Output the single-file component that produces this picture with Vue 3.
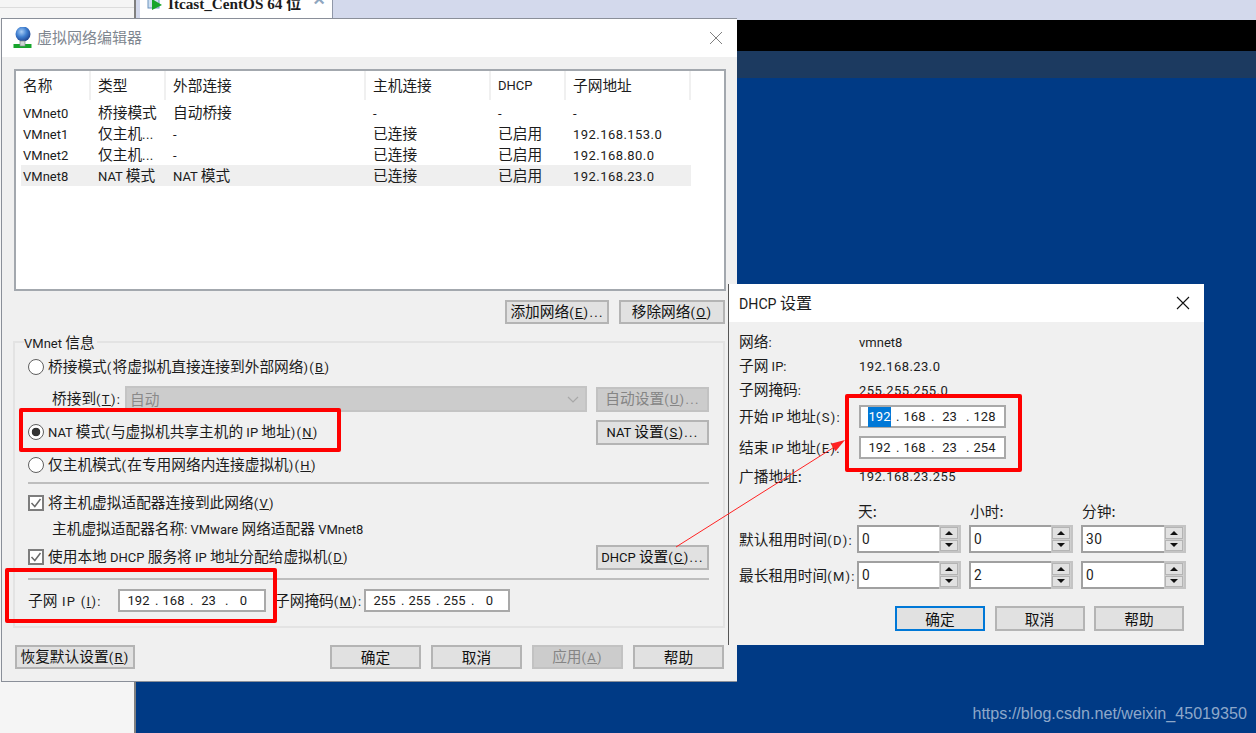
<template>
  <div class="desktop">
    <aside class="sidebar"><div class="sidebar-top"></div></aside>
    <section class="stage">
      <div class="tabbar">
        <div class="tab">
          <svg class="tab-icon" width="16" height="16" viewBox="0 0 16 16">
            <rect x="1" y="0" width="11" height="11" fill="#cfe0f2" stroke="#6c93bd" />
            <path d="M5 2 L15 8 L5 13 Z" fill="#16a52b" />
          </svg>
          <span class="tab-name">Itcast_CentOS 64 位</span>
          <span class="tab-close">×</span>
        </div>
      </div>
      <div class="band-black"></div>
      <div class="band-dark"></div>
      <div class="band-blue"></div>
    </section>

    <!-- 虚拟网络编辑器 -->
    <div class="win main-win">
      <header class="titlebar">
        <svg class="app-icon" width="20" height="21" viewBox="0 0 20 21">
          <defs>
            <radialGradient id="globe" cx="0.4" cy="0.35" r="0.7">
              <stop offset="0" stop-color="#a9cdf5" />
              <stop offset="0.5" stop-color="#3f7fd0" />
              <stop offset="1" stop-color="#1c3f8c" />
            </radialGradient>
          </defs>
          <circle cx="10" cy="7" r="7.5" fill="url(#globe)" />
          <rect x="0.5" y="17" width="18" height="4" fill="#17a52c" />
          <rect x="7" y="14" width="5" height="5" fill="#cfd5d5" stroke="#7d8a8a" stroke-width="0.7" />
        </svg>
        <span class="main-title">虚拟网络编辑器</span>
        <svg class="close-x" width="14" height="14" viewBox="0 0 14 14">
          <path d="M1 1 L13 13 M13 1 L1 13" stroke="#808080" stroke-width="1" fill="none" />
        </svg>
      </header>

      <div class="main-body">
        <div class="list">
          <div class="list-head">
            <div v-for="c in columns" :key="c" class="head-cell"><T :t="c" /></div>
          </div>
          <div v-for="r in networks" :key="r[0]" class="list-row" :class="{ active: r[0] === 'VMnet8' }">
            <div v-for="(c, i) in r" :key="i" class="cell"><T :t="c" /></div>
          </div>
        </div>

        <div class="list-actions">
          <button class="btn btn-add"><T t="添加网络(&E)..." /></button>
          <button class="btn btn-remove"><T t="移除网络(&O)" /></button>
        </div>

        <div class="group">
          <span class="legend"><T t="VMnet 信息" /></span>

          <div class="row first">
            <span class="radio"></span>
            <T t="桥接模式(将虚拟机直接连接到外部网络)(&B)" />
          </div>
          <div class="row bridge-row">
            <span class="bridge-label"><T t="桥接到(&T):" /></span>
            <div class="select">
              <span>自动</span>
              <svg width="12" height="7" viewBox="0 0 12 7">
                <path d="M1 1 L6 6 L11 1" stroke="#a8a8a8" stroke-width="1.2" fill="none" />
              </svg>
            </div>
            <button class="btn btn-side disabled"><T t="自动设置(&U)..." /></button>
          </div>
          <div class="row nat-row">
            <span class="radio checked"></span>
            <T t="NAT 模式(与虚拟机共享主机的 IP 地址)(&N)" />
            <button class="btn btn-side push"><T t="NAT 设置(&S)..." /></button>
          </div>
          <div class="row host-row">
            <span class="radio"></span>
            <T t="仅主机模式(在专用网络内连接虚拟机)(&H)" />
          </div>
          <div class="sep sep-a"></div>
          <div class="row adapter-row">
            <span class="check">
              <svg width="12" height="12" viewBox="0 0 12 12">
                <path d="M1.5 6 L4.8 9.5 L10.5 2" stroke="#6a6a6a" stroke-width="1.5" fill="none" />
              </svg>
            </span>
            <T t="将主机虚拟适配器连接到此网络(&V)" />
          </div>
          <div class="row adapter-name">
            <T t="主机虚拟适配器名称: VMware 网络适配器 VMnet8" />
          </div>
          <div class="row dhcp-row">
            <span class="check">
              <svg width="12" height="12" viewBox="0 0 12 12">
                <path d="M1.5 6 L4.8 9.5 L10.5 2" stroke="#6a6a6a" stroke-width="1.5" fill="none" />
              </svg>
            </span>
            <T t="使用本地 DHCP 服务将 IP 地址分配给虚拟机(&D)" />
            <button class="btn btn-side push"><T t="DHCP 设置(&C)..." /></button>
          </div>
          <div class="sep sep-b"></div>
          <div class="row subnet-row">
            <span class="subnet-label"><T t="子网 IP (&I):" /></span>
            <div class="ip ip-subnet">
              <template v-for="(o, i) in subnetIp" :key="i">
                <span class="oct">{{ o }}</span><span v-if="i < 3" class="dot">.</span>
              </template>
            </div>
            <span class="mask-label"><T t="子网掩码(&M):" /></span>
            <div class="ip ip-mask">
              <template v-for="(o, i) in maskIp" :key="i">
                <span class="oct">{{ o }}</span><span v-if="i < 3" class="dot">.</span>
              </template>
            </div>
          </div>
        </div>

        <div class="main-actions">
          <button class="btn btn-restore"><T t="恢复默认设置(&R)" /></button>
          <button class="btn btn-foot foot-first">确定</button>
          <button class="btn btn-foot">取消</button>
          <button class="btn btn-foot disabled"><T t="应用(&A)" /></button>
          <button class="btn btn-foot">帮助</button>
        </div>
      </div>
    </div>

    <!-- DHCP 设置 -->
    <div class="win dhcp-win">
      <header class="titlebar dhcp-titlebar">
        <span class="dhcp-title"><T t="DHCP 设置" /></span>
        <svg class="close-x dark" width="14" height="14" viewBox="0 0 14 14">
          <path d="M1 1 L13 13 M13 1 L1 13" stroke="#111" stroke-width="1.1" fill="none" />
        </svg>
      </header>
      <div class="dhcp-body">
        <div v-for="f in dhcpInfo" :key="f[0]" class="info-row">
          <span class="info-label"><T :t="f[0]" /></span>
          <span class="info-value"><T :t="f[1]" /></span>
        </div>
        <div class="range-row range-start">
          <span class="info-label"><T t="开始 IP 地址(S):" /></span>
          <div class="ip ip-range">
            <template v-for="(o, i) in startIp" :key="i">
              <span class="oct"><span :class="{ picked: i === 0 }">{{ o }}</span></span><span v-if="i < 3" class="dot">.</span>
            </template>
          </div>
        </div>
        <div class="range-row range-end">
          <span class="info-label"><T t="结束 IP 地址(E):" /></span>
          <div class="ip ip-range">
            <template v-for="(o, i) in endIp" :key="i">
              <span class="oct">{{ o }}</span><span v-if="i < 3" class="dot">.</span>
            </template>
          </div>
        </div>
        <div class="info-row broadcast">
          <span class="info-label">广播地址:</span>
          <span class="info-value"><T t="192.168.23.255" /></span>
        </div>

        <div class="lease">
          <span></span>
          <span v-for="u in leaseUnits" :key="u" class="unit">{{ u }}</span>
          <template v-for="l in leases" :key="l.label">
            <span class="lease-label"><T :t="l.label" /></span>
            <div v-for="(v, i) in l.values" :key="i" class="spin">
              <div class="spin-input"><T :t="v" /></div>
              <div class="spin-btns">
                <span class="spin-btn"><i class="up"></i></span>
                <span class="spin-btn"><i class="down"></i></span>
              </div>
            </div>
          </template>
        </div>

        <div class="dhcp-actions">
          <button class="btn btn-dhcp focused">确定</button>
          <button class="btn btn-dhcp">取消</button>
          <button class="btn btn-dhcp">帮助</button>
        </div>
      </div>
    </div>

    <!-- 截图上的红色标注 -->
    <div class="mark mark-nat"></div>
    <div class="mark mark-subnet"></div>
    <div class="mark mark-range"></div>
    <svg class="arrow" width="1256" height="733" viewBox="0 0 1256 733">
      <line x1="676" y1="547" x2="836" y2="446" stroke="#f22" stroke-width="1" />
      <polygon points="845,440 835.6,451.3 830.8,443.7" fill="#f22" />
    </svg>

    <div class="watermark">https://blog.csdn.net/weixin_45019350</div>
  </div>
</template>

<script setup>
import { h } from 'vue'

// 中文和西文字号不同，这里把西文拆出来单独包一层；& 后面的字母带下划线
function T(props) {
  const parts = props.t.split(/([\x20-\x7e]+)/).filter(Boolean).map((s) => {
    if (!/^[\x20-\x7e]/.test(s)) return s
    const m = s.match(/^(.*)&(.)(.*)$/)
    const cls = ['lat']
    if (/[()]|\.\.\./.test(s)) cls.push('wide')
    if (/^[\d.]+$/.test(s)) cls.push('num')
    return h('span', { class: cls }, m ? [m[1], h('u', m[2]), m[3]] : s)
  })
  return h('span', parts)
}
T.props = ['t']

const columns = ['名称', '类型', '外部连接', '主机连接', 'DHCP', '子网地址']

const networks = [
  ['VMnet0', '桥接模式', '自动桥接', '-', '-', '-'],
  ['VMnet1', '仅主机...', '-', '已连接', '已启用', '192.168.153.0'],
  ['VMnet2', '仅主机...', '-', '已连接', '已启用', '192.168.80.0'],
  ['VMnet8', 'NAT 模式', 'NAT 模式', '已连接', '已启用', '192.168.23.0']
]

const subnetIp = ['192', '168', '23', '0']
const maskIp = ['255', '255', '255', '0']
const startIp = ['192', '168', '23', '128']
const endIp = ['192', '168', '23', '254']

const dhcpInfo = [
  ['网络:', 'vmnet8'],
  ['子网 IP:', '192.168.23.0'],
  ['子网掩码:', '255.255.255.0']
]

const leaseUnits = ['天:', '小时:', '分钟:']

const leases = [
  { label: '默认租用时间(D):', values: ['0', '0', '30'] },
  { label: '最长租用时间(M):', values: ['0', '2', '0'] }
]
</script>

<style>
html, body {
  margin: 0;
  background: #003a85;
}

.lat {
  font-family: Roboto, "Noto Sans CJK SC", sans-serif;
  font-size: 0.885em;
}

.lat.wide {
  letter-spacing: 1.3px;
}

.lat.num {
  letter-spacing: 0.45px;
}
</style>

<style scoped>
.desktop {
  position: relative;
  display: flex;
  width: 1256px;
  height: 733px;
  overflow: hidden;
  font-family: "Noto Sans CJK SC", sans-serif;
  font-size: 14.7px;
  line-height: 20px;
  color: #1c1c1c;
}

.sidebar {
  width: 134px;
  background: #f5f5f5;
  border-right: 2px solid #808080;
}

.sidebar-top {
  height: 7px;
  border-bottom: 1px solid #dcdcdc;
}

.stage {
  flex: 1;
  display: flex;
  flex-direction: column;
}

.tabbar {
  height: 20px;
  background: #d3d9ec;
  padding-left: 4px;
  overflow: hidden;
}

.tab {
  display: flex;
  align-items: flex-end;
  width: 193px;
  height: 18px;
  background: #fff;
  border-right: 1px solid #8f97a8;
  box-sizing: border-box;
  overflow: hidden;
}

.tab-icon {
  margin: 0 5px 5px 7px;
  flex: none;
}

.tab-name {
  font-family: "Liberation Serif", "Noto Sans CJK SC", serif;
  font-weight: 700;
  font-size: 15.2px;
  line-height: 16px;
  margin-bottom: 6px;
  white-space: nowrap;
}

.tab-close {
  font-family: "Liberation Sans", sans-serif;
  font-size: 20px;
  line-height: 20px;
  font-weight: 700;
  color: #8fa6bf;
  margin: 0 0 9px 12px;
}

.band-black {
  height: 31px;
  background: #000;
}

.band-dark {
  height: 27px;
  background: #1c3a60;
}

.band-blue {
  flex: 1;
  background: #003a85;
}

.win {
  position: absolute;
  box-sizing: border-box;
  background: #f0f0f0;
}

.main-win {
  left: 1px;
  top: 18px;
  width: 736px;
  height: 664px;
  border: 1px solid #8a8f99;
  border-right: 0;
}

.titlebar {
  display: flex;
  align-items: center;
  height: 38px;
  background: #fff;
}

.app-icon {
  margin: 0 0 2px 11px;
  flex: none;
}

.main-title {
  margin: 0 0 2px 4px;
  font-size: 15px;
  color: #7f8790;
}

.close-x {
  margin-left: auto;
  margin-right: 14px;
}

.main-body {
  padding: 12px 11px 0 12px;
}

.list {
  height: 222px;
  box-sizing: border-box;
  background: #fff;
  border: 2px solid #a3a8ae;
}

.list-head {
  display: grid;
  grid-template-columns: 70px 75px 200px 125px 75px 125px;
  height: 29px;
  margin: 0 0 2px 5px;
}

.head-cell {
  display: flex;
  align-items: center;
  padding: 0 0 2px 2px;
  border-right: 2px solid #f0f0f0;
}

.head-cell + .head-cell {
  padding-left: 7px;
}

.list-row {
  display: grid;
  grid-template-columns: 69px 75px 200px 125px 75px 125px;
  height: 21px;
  margin-left: 5px;
  width: 670px;
  line-height: 19px;
}

.list-row.active {
  background: #efefef;
}

.cell {
  padding-left: 2px;
  white-space: nowrap;
}

.cell + .cell {
  padding-left: 8px;
}

.list-actions {
  display: flex;
  justify-content: flex-end;
  gap: 10px;
  margin: 9px 1px 0 0;
}

.btn {
  display: flex;
  align-items: center;
  justify-content: center;
  box-sizing: border-box;
  height: 24px;
  padding: 0;
  font: inherit;
  color: #111;
  background: #e1e1e1;
  border: 2px solid #b4b4b4;
  white-space: nowrap;
}

.btn.disabled {
  background: #cccccc;
  border-color: #c2c2c2;
  color: #858585;
}

.btn.focused {
  border-color: #0078d7;
}

.btn-add {
  width: 104px;
}

.btn-remove {
  width: 106px;
}

.btn-side {
  width: 113px;
  height: 25px;
  flex: none;
}

.push {
  margin-left: auto;
}

.group {
  position: relative;
  box-sizing: border-box;
  margin: 17px 1px 0 -1px;
  height: 287px;
  padding: 12px 14px 0 13px;
  border: 2px solid #e3e3e3;
}

.legend {
  position: absolute;
  left: 9px;
  top: -11px;
  padding: 0 2px 0 0;
  background: #f0f0f0;
}

.row {
  display: flex;
  align-items: center;
  height: 24px;
  white-space: nowrap;
}

.bridge-row {
  height: 26px;
  margin-top: 7px;
}

.nat-row {
  margin-top: 8px;
}

.host-row {
  margin-top: 9px;
}

.adapter-row {
  margin-top: 7px;
}

.adapter-name {
  margin-top: 2px;
  padding-left: 24px;
}

.dhcp-row {
  margin-top: 4px;
}

.subnet-row {
  height: 23px;
  margin-top: 9px;
}

.sep {
  height: 2px;
  background: #bdbdbd;
}

.sep-a {
  margin-top: 5px;
}

.sep-b {
  margin-top: 9px;
}

.radio {
  flex: none;
  box-sizing: border-box;
  width: 16px;
  height: 16px;
  margin-right: 4px;
  background: #fff;
  border: 1.5px solid #5f5f5f;
  border-radius: 50%;
}

.radio.checked {
  background: radial-gradient(circle, #333 0 4px, #fff 4.6px);
}

.check {
  flex: none;
  display: flex;
  align-items: center;
  justify-content: center;
  box-sizing: border-box;
  width: 16px;
  height: 16px;
  margin-right: 4px;
  background: #fff;
  border: 2px solid #7d7d7d;
}

.bridge-label {
  width: 97px;
  padding-left: 24px;
  box-sizing: border-box;
  flex: none;
}

.select {
  flex: none;
  display: flex;
  align-items: center;
  justify-content: space-between;
  box-sizing: border-box;
  width: 462px;
  height: 26px;
  margin-right: 9px;
  padding: 0 6px 0 3px;
  background: #cccccc;
  border: 2px solid #c4c4c4;
  color: #8a8a8a;
}

.subnet-label {
  flex: none;
  width: 90px;
}

.mask-label {
  flex: none;
  width: 89px;
  margin-left: 9px;
}

.ip {
  flex: none;
  display: flex;
  align-items: center;
  box-sizing: border-box;
  height: 23px;
  padding-left: 3.5px;
  background: #fff;
  border: 2px solid #a9a9a9;
  font-family: Roboto, sans-serif;
  font-size: 13px;
}

.ip-subnet {
  width: 148px;
}

.ip-mask {
  width: 146px;
}

.ip-range {
  width: 147px;
}

.oct {
  width: 30px;
  text-align: center;
}

.dot {
  width: 5px;
  text-align: right;
}

.picked {
  display: inline-block;
  padding: 0 1px;
  background: #0078d7;
  color: #fff;
}

.main-actions {
  display: flex;
  gap: 10px;
  margin: 17px 2px 0 1px;
}

.btn-restore {
  width: 120px;
}

.btn-foot {
  width: 91px;
}

.foot-first {
  margin-left: auto;
}

.dhcp-win {
  left: 728px;
  top: 284px;
  width: 476px;
  height: 361px;
  border-left: 1px solid #555;
}

.dhcp-titlebar {
  padding-left: 10px;
}

.dhcp-title {
  font-size: 16px;
}

.dhcp-body {
  padding: 8px 20px 0 10px;
}

.info-row {
  display: flex;
  align-items: center;
  height: 24px;
}

.info-label {
  flex: none;
  width: 120px;
  white-space: nowrap;
}

.info-value {
  white-space: nowrap;
}

.range-row {
  display: flex;
  align-items: center;
  height: 23px;
}

.range-start {
  margin-top: 3px;
}

.range-end {
  margin-top: 8px;
}

.broadcast {
  margin-top: 5px;
}

.lease {
  display: grid;
  grid-template-columns: 110px 104px 104px 105px;
  grid-template-rows: 26px 36px 29px;
  column-gap: 8px;
  margin-top: 11px;
}

.unit {
  height: 24px;
  line-height: 24px;
  padding-left: 1px;
}

.lease-label {
  height: 28px;
  line-height: 28px;
  white-space: nowrap;
}

.spin {
  display: flex;
  height: 28px;
  box-sizing: border-box;
  background: #cfcfcf;
  border: 2px solid #c4c4c4;
  align-self: start;
}

.spin-input {
  flex: 1;
  margin: -2px 0 -2px -2px;
  padding: 0 0 0 3px;
  font-size: 15.5px;
  background: #fff;
  border: 2px solid #a0a0a0;
  border-right: 0;
}

.spin-btns {
  flex: none;
  display: flex;
  flex-direction: column;
  gap: 1px;
  width: 20px;
  padding: 0 1px;
  box-sizing: border-box;
}

.spin-btn {
  flex: 1;
  display: flex;
  align-items: center;
  justify-content: center;
  background: #e1e1e1;
  border: 1px solid #b4b4b4;
}

.up {
  border-left: 4px solid transparent;
  border-right: 4px solid transparent;
  border-bottom: 4px solid #111;
}

.down {
  border-left: 4px solid transparent;
  border-right: 4px solid transparent;
  border-top: 4px solid #111;
}

.dhcp-actions {
  display: flex;
  justify-content: flex-end;
  gap: 9.5px;
  margin-top: 16px;
}

.btn-dhcp {
  width: 90px;
  height: 25px;
}

.mark {
  position: absolute;
  box-sizing: border-box;
  border: 4px solid #f00;
  border-radius: 2px;
}

.mark-nat {
  left: 19px;
  top: 408px;
  width: 322px;
  height: 44px;
}

.mark-subnet {
  left: 5px;
  top: 568px;
  width: 272px;
  height: 55px;
}

.mark-range {
  left: 845px;
  top: 394px;
  width: 177px;
  height: 78px;
}

.arrow {
  position: absolute;
  left: 0;
  top: 0;
  pointer-events: none;
}

.watermark {
  position: absolute;
  right: 9px;
  bottom: 10px;
  font-family: "Liberation Sans", Arial, sans-serif;
  font-size: 16.15px;
  line-height: 20px;
  color: #8ea8ca;
}
</style>
